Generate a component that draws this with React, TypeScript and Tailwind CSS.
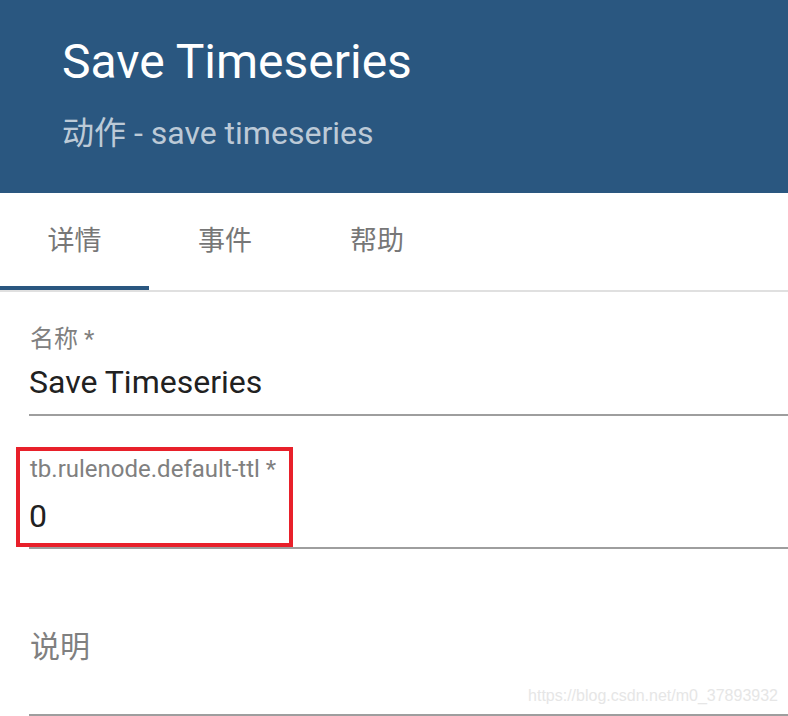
import React from 'react';

const font = "font-['Roboto','Noto_Sans_CJK_SC',sans-serif]";

const tabs = [
  { label: '详情', width: 'w-[149px]', active: true },
  { label: '事件', width: 'w-[152px]', active: false },
  { label: '帮助', width: 'w-[152px]', active: false },
];

const App: React.FC = () => {
  return (
    <div className={`relative w-[788px] h-[716px] overflow-hidden bg-white ${font}`}>
      {/* header */}
      <div className="h-[193px] bg-[#2a5780] pl-[62px] pt-[34px]">
        <div className="text-[48px] leading-[56px] text-white">Save Timeseries</div>
        <div className="mt-[24px] text-[32px] leading-[38px] text-white/70">动作 - save timeseries</div>
      </div>

      {/* tabs */}
      <div className="flex h-[99px] border-b-2 border-[#e0e0e0]">
        {tabs.map((tab) => (
          <div
            key={tab.label}
            className={`${tab.width} flex items-center justify-center text-[27px] text-[#777777] ${
              tab.active ? 'border-b-4 border-[#2a5780] pt-1' : ''
            }`}
          >
            {tab.label}
          </div>
        ))}
      </div>

      {/* form */}
      <div className="pl-[29px]">
        <div className="pt-[33px]">
          <div className="pl-px text-[24px] leading-[28px] text-[#808080]">名称 *</div>
          <div className="mt-[10px] text-[32px] leading-[38px] text-[#212121]">Save Timeseries</div>
          <div className="mt-[13px] h-[2px] bg-[#9e9e9e]" />
        </div>

        <div className="relative pt-[39px]">
          <div className="pl-px text-[24px] leading-[28px] text-[#808080]">tb.rulenode.default-ttl *</div>
          <div className="mt-[14px] text-[32px] leading-[38px] text-[#212121]">0</div>
          <div className="mt-[12px] h-[2px] bg-[#9e9e9e]" />
          <div className="absolute left-[-13px] top-[31px] w-[277px] h-[100px] border-4 border-[#e8202a]" />
        </div>

        <div className="pt-[80px]">
          <div className="pl-px text-[30px] leading-[36px] text-[#808080]">说明</div>
          <div className="mt-[49px] h-[2px] bg-[#9e9e9e]" />
        </div>
      </div>

      <div className="absolute right-[10px] top-[686px] font-['Liberation_Sans',sans-serif] text-[16px] leading-[20px] text-[#e6e6e6]">
        https://blog.csdn.net/m0_37893932
      </div>
    </div>
  );
};

export default App;
